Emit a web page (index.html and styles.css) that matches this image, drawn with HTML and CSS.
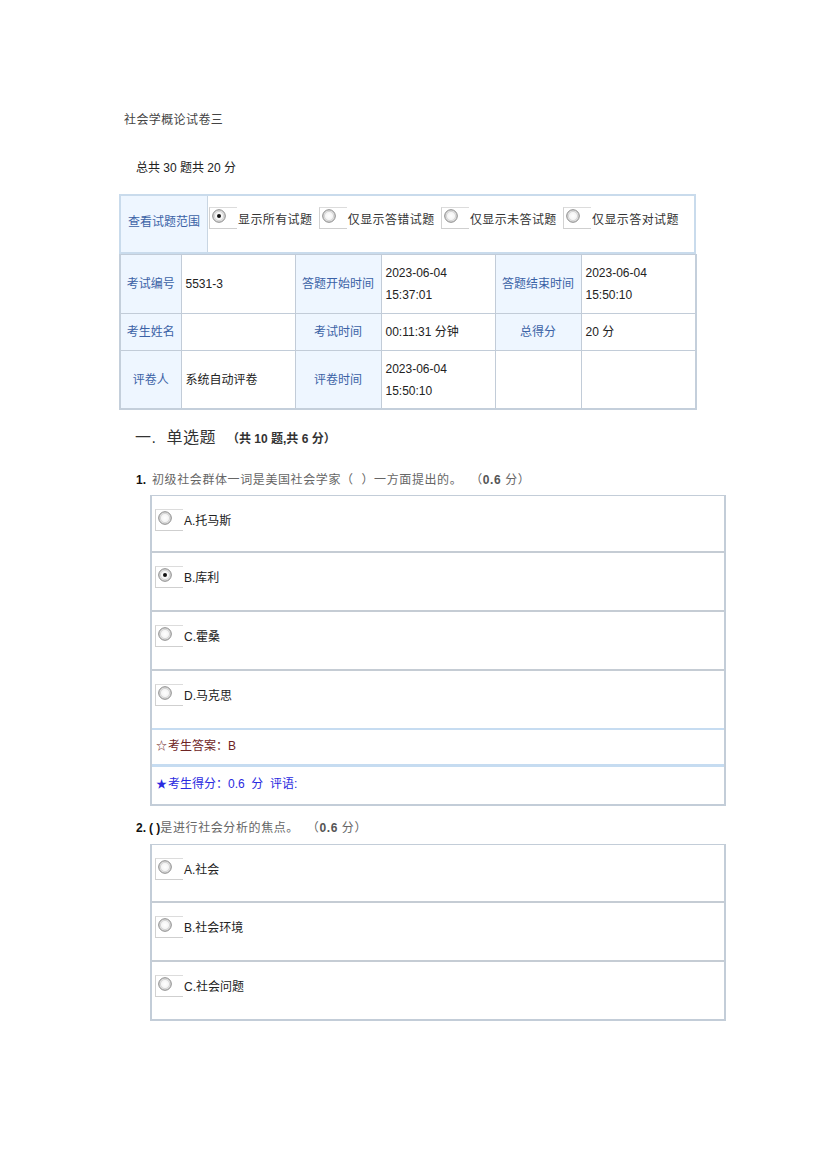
FILE: index.html
```html
<!DOCTYPE html>
<html lang="zh-CN">
<head>
<meta charset="utf-8">
<title>社会学概论试卷三</title>
<link rel="stylesheet" href="styles.css">
</head>
<body>
<div class="page">
  <div class="doc-title">社会学概论试卷三</div>
  <div class="summary">总共 30 题共 20 分</div>

  <table class="filter">
    <tr>
      <td class="lbl filter-lbl">查看试题范围</td>
      <td class="filter-opts">
        <span class="radio checked"><svg width="14" height="14" viewBox="0 0 14 14"><defs><radialGradient id="g1" cx="50%" cy="50%" r="50%"><stop offset="0" stop-color="#fff"/><stop offset="0.6" stop-color="#f4f4f4"/><stop offset="1" stop-color="#cfcfcf"/></radialGradient></defs><circle cx="7" cy="7" r="6.3" fill="url(#g1)" stroke="#8c8c8c" stroke-width="1"/><circle cx="7" cy="7" r="4.6" fill="none" stroke="#d6d6d6" stroke-width="1"/><circle cx="7" cy="7" r="2" fill="#111"/></svg></span><span class="ftxt">显示所有试题</span>
        <span class="radio"><svg width="14" height="14" viewBox="0 0 14 14"><circle cx="7" cy="7" r="6.3" fill="url(#g1)" stroke="#8c8c8c" stroke-width="1"/><circle cx="7" cy="7" r="4.6" fill="none" stroke="#d6d6d6" stroke-width="1"/></svg></span><span class="ftxt">仅显示答错试题</span>
        <span class="radio"><svg width="14" height="14" viewBox="0 0 14 14"><circle cx="7" cy="7" r="6.3" fill="url(#g1)" stroke="#8c8c8c" stroke-width="1"/><circle cx="7" cy="7" r="4.6" fill="none" stroke="#d6d6d6" stroke-width="1"/></svg></span><span class="ftxt">仅显示未答试题</span>
        <span class="radio"><svg width="14" height="14" viewBox="0 0 14 14"><circle cx="7" cy="7" r="6.3" fill="url(#g1)" stroke="#8c8c8c" stroke-width="1"/><circle cx="7" cy="7" r="4.6" fill="none" stroke="#d6d6d6" stroke-width="1"/></svg></span><span class="ftxt">仅显示答对试题</span>
      </td>
    </tr>
  </table>

  <table class="info">
    <colgroup>
      <col class="c1"><col class="c2"><col class="c3"><col class="c4"><col class="c5"><col class="c6">
    </colgroup>
    <tr class="r1">
      <td class="lbl">考试编号</td>
      <td class="val">5531-3</td>
      <td class="lbl">答题开始时间</td>
      <td class="val">2023-06-04<br>15:37:01</td>
      <td class="lbl">答题结束时间</td>
      <td class="val">2023-06-04<br>15:50:10</td>
    </tr>
    <tr class="r2">
      <td class="lbl">考生姓名</td>
      <td class="val"></td>
      <td class="lbl">考试时间</td>
      <td class="val">00:11:31 分钟</td>
      <td class="lbl">总得分</td>
      <td class="val">20 分</td>
    </tr>
    <tr class="r3">
      <td class="lbl">评卷人</td>
      <td class="val">系统自动评卷</td>
      <td class="lbl">评卷时间</td>
      <td class="val">2023-06-04<br>15:50:10</td>
      <td class="val"></td>
      <td class="val"></td>
    </tr>
  </table>

  <div class="section-head"><span class="sec-title">一.</span><span class="sec-title sec-name">单选题</span><span class="sec-note">（共 10 题,共 6 分）</span></div>

  <div class="q-title q1"><b class="qno">1.</b><span class="qtext">初级社会群体一词是美国社会学家（ &nbsp;）一方面提出的。 &nbsp;（<b>0.6</b> 分）</span></div>
  <div class="qbox">
    <div class="opt first"><span class="radio"><svg width="14" height="14" viewBox="0 0 14 14"><circle cx="7" cy="7" r="6.3" fill="url(#g1)" stroke="#8c8c8c" stroke-width="1"/><circle cx="7" cy="7" r="4.6" fill="none" stroke="#d6d6d6" stroke-width="1"/></svg></span><span class="otxt">A.托马斯</span></div>
    <div class="opt"><span class="radio"><svg width="14" height="14" viewBox="0 0 14 14"><circle cx="7" cy="7" r="6.3" fill="url(#g1)" stroke="#8c8c8c" stroke-width="1"/><circle cx="7" cy="7" r="4.6" fill="none" stroke="#d6d6d6" stroke-width="1"/><circle cx="7" cy="7" r="2" fill="#111"/></svg></span><span class="otxt">B.库利</span></div>
    <div class="opt"><span class="radio"><svg width="14" height="14" viewBox="0 0 14 14"><circle cx="7" cy="7" r="6.3" fill="url(#g1)" stroke="#8c8c8c" stroke-width="1"/><circle cx="7" cy="7" r="4.6" fill="none" stroke="#d6d6d6" stroke-width="1"/></svg></span><span class="otxt">C.霍桑</span></div>
    <div class="opt last-opt"><span class="radio"><svg width="14" height="14" viewBox="0 0 14 14"><circle cx="7" cy="7" r="6.3" fill="url(#g1)" stroke="#8c8c8c" stroke-width="1"/><circle cx="7" cy="7" r="4.6" fill="none" stroke="#d6d6d6" stroke-width="1"/></svg></span><span class="otxt">D.马克思</span></div>
    <div class="ans"><span class="star">☆</span>考生答案：B</div>
    <div class="score"><span class="star">★</span>考生得分：0.6 &nbsp;分 &nbsp;评语:</div>
  </div>

  <div class="q-title q2"><b class="qno">2.</b><b class="qno paren">( )</b><span class="qtext">是进行社会分析的焦点。 &nbsp;（<b>0.6</b> 分）</span></div>
  <div class="qbox qbox2">
    <div class="opt first"><span class="radio"><svg width="14" height="14" viewBox="0 0 14 14"><circle cx="7" cy="7" r="6.3" fill="url(#g1)" stroke="#8c8c8c" stroke-width="1"/><circle cx="7" cy="7" r="4.6" fill="none" stroke="#d6d6d6" stroke-width="1"/></svg></span><span class="otxt">A.社会</span></div>
    <div class="opt"><span class="radio"><svg width="14" height="14" viewBox="0 0 14 14"><circle cx="7" cy="7" r="6.3" fill="url(#g1)" stroke="#8c8c8c" stroke-width="1"/><circle cx="7" cy="7" r="4.6" fill="none" stroke="#d6d6d6" stroke-width="1"/></svg></span><span class="otxt">B.社会环境</span></div>
    <div class="opt final"><span class="radio"><svg width="14" height="14" viewBox="0 0 14 14"><circle cx="7" cy="7" r="6.3" fill="url(#g1)" stroke="#8c8c8c" stroke-width="1"/><circle cx="7" cy="7" r="4.6" fill="none" stroke="#d6d6d6" stroke-width="1"/></svg></span><span class="otxt">C.社会问题</span></div>
  </div>
</div>
</body>
</html>
```

FILE: styles.css
```css
html, body {
  margin: 0;
  padding: 0;
  background: #fff;
}
body {
  font-family: "Liberation Sans", "Noto Sans CJK SC", sans-serif;
  font-size: 12px;
  color: #222;
}
.page {
  width: 576px;
  margin-left: 119px;
  padding-top: 110px;
  padding-bottom: 40px;
}
.doc-title {
  padding-left: 5px;
  line-height: 20px;
  font-size: 12px;
  letter-spacing: 0.4px;
  color: #444;
}
.summary {
  margin-top: 28px;
  padding-left: 17px;
  line-height: 20px;
  font-size: 12px;
  color: #222;
}

/* filter table */
table {
  border-collapse: collapse;
  table-layout: fixed;
}
.filter {
  margin-top: 16px;
  width: 577px;
  height: 60px;
  border: 2px solid #c9dbec;
}
.filter td {
  padding: 0;
  vertical-align: middle;
}
.lbl {
  background: #eef6ff;
  color: #3b62a6;
  text-align: center;
}
.filter-lbl {
  width: 86px;
  border-right: 1px solid #c9d6e3;
  padding: 0 0 8px 0 !important;
}
.filter-opts {
  padding: 0 0 12px 1px !important;
  white-space: nowrap;
  color: #333;
}
.radio {
  display: inline-block;
  vertical-align: middle;
  width: 28px;
  height: 22px;
  border-left: 1px solid #d2d2d2;
  border-top: 1px solid #dcdcdc;
  border-bottom: 1px solid #cfcfcf;
  box-sizing: border-box;
  padding: 1px 0 0 2px;
  line-height: 0;
}
.radio svg {
  display: block;
}
.ftxt {
  vertical-align: middle;
  margin-left: 1px;
  margin-right: 3px;
  letter-spacing: 0.4px;
}

/* info table */
.info {
  width: 576px;
  border: 2px solid #c4cfdb;
  border-top: none;
}
.info col.c1 { width: 61px; }
.info col.c2 { width: 114px; }
.info col.c3 { width: 86px; }
.info col.c4 { width: 114px; }
.info col.c5 { width: 86px; }
.info col.c6 { width: 115px; }
.info td {
  border: 1px solid #c2ccd8;
  padding: 0 4px;
  line-height: 22px;
  vertical-align: middle;
  white-space: nowrap;
}
.info td.lbl {
  padding: 0;
}
.info td.val {
  color: #222;
}
.info .r1 td { height: 58px; }
.info .r2 td { height: 36px; }
.info .r3 td { height: 57px; }

/* section */
.section-head {
  margin-top: 16px;
  padding-left: 16px;
  line-height: 24px;
  white-space: nowrap;
}
.sec-title {
  font-size: 16px;
  color: #333;
  letter-spacing: 0.5px;
}
.sec-name {
  margin-left: 10px;
}
.sec-note {
  margin-left: 11px;
  font-size: 12px;
  color: #333;
  font-weight: bold;
}

.q-title {
  padding-left: 17px;
  line-height: 20px;
  white-space: nowrap;
}
.q1 { margin-top: 19px; }
.q2 { margin-top: 12px; }
.qno {
  color: #111;
  font-weight: bold;
}
.q1 .qno {
  margin-right: 6px;
}
.paren {
  margin-left: 3px;
}
.qtext {
  color: #666;
  letter-spacing: 0.6px;
}
.qtext b {
  color: #555;
}

.qbox {
  margin-top: 5px;
  margin-left: 31px;
  width: 576px;
  box-sizing: border-box;
  border-left: 2px solid #c3cdd8;
  border-right: 2px solid #c3cdd8;
  border-top: 1px solid #c3cdd8;
  border-bottom: 2px solid #c3cdd8;
}
.qbox2 { margin-top: 6px; }
.opt {
  height: 59px;
  box-sizing: border-box;
  padding: 13px 0 0 3px;
  border-bottom: 2px solid #c5ccd4;
  display: flex;
  align-items: flex-start;
  color: #222;
}
.opt.first {
  height: 57px;
}
.opt .otxt {
  line-height: 22px;
  margin-left: 1px;
  padding-top: 1px;
}
.opt.last-opt {
  border-bottom: 2px solid #c6dcf1;
}
.opt.final {
  border-bottom: none;
  height: 57px;
}
.qbox2 .opt.first {
  height: 58px;
}
.ans {
  height: 37px;
  box-sizing: border-box;
  border-bottom: 3px solid #c6dcf1;
  padding-left: 4px;
  line-height: 33px;
  color: #6e2424;
}
.score {
  height: 37px;
  box-sizing: border-box;
  padding-left: 4px;
  line-height: 35px;
  color: #2a2ae0;
}
.star {
  font-size: 11px;
  margin-right: 1px;
}
```
